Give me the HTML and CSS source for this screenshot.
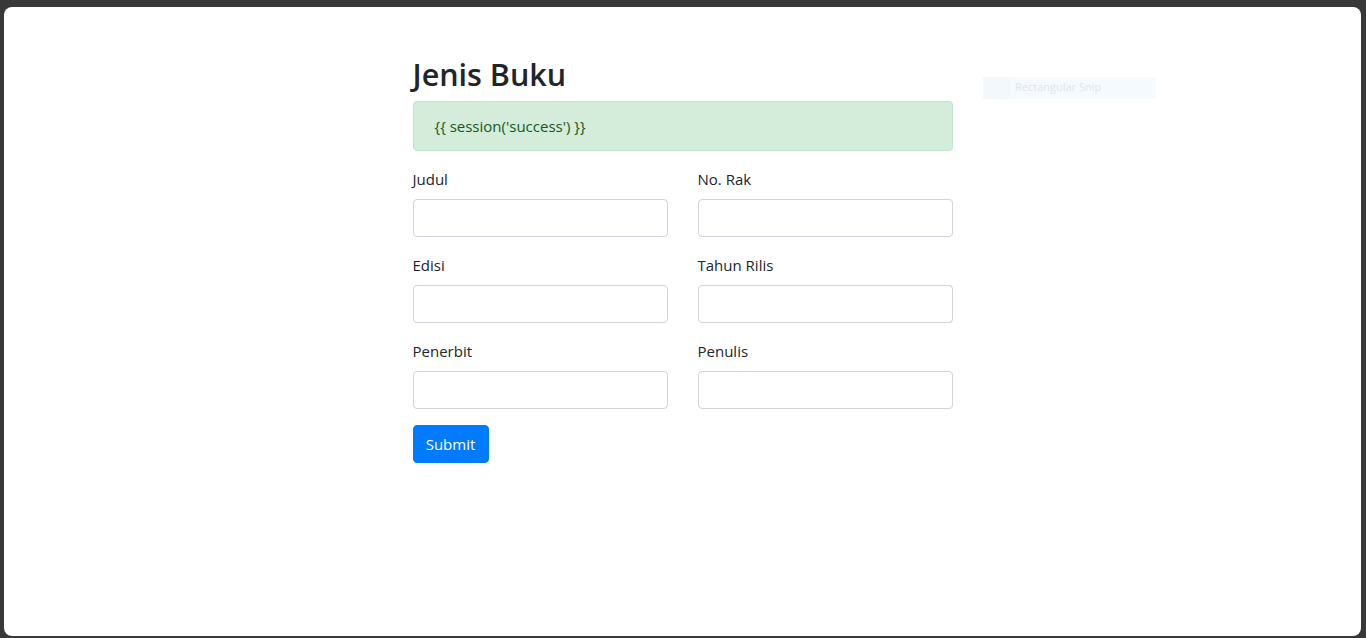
FILE: index.html
```html
<!DOCTYPE html>
<html lang="id">
<head>
<meta charset="utf-8">
<title>Jenis Buku</title>
<link rel="stylesheet" href="styles.css">
</head>
<body>
<div class="window">
  <div class="container">
    <h1 class="title">Jenis Buku</h1>
    <div class="alert">{{ session('success') }}</div>
    <form class="form">
      <div class="grid">
        <div class="group">
          <label class="label">Judul</label>
          <input class="input" type="text">
        </div>
        <div class="group">
          <label class="label">No. Rak</label>
          <input class="input" type="text">
        </div>
        <div class="group">
          <label class="label">Edisi</label>
          <input class="input" type="text">
        </div>
        <div class="group">
          <label class="label">Tahun Rilis</label>
          <input class="input" type="text">
        </div>
        <div class="group">
          <label class="label">Penerbit</label>
          <input class="input" type="text">
        </div>
        <div class="group">
          <label class="label">Penulis</label>
          <input class="input" type="text">
        </div>
      </div>
      <button class="btn" type="button">Submit</button>
    </form>
  </div>
  <div class="snip"><span class="snip-icon"></span><span class="snip-text">Rectangular Snip</span></div>
</div>
</body>
</html>
```
FILE: styles.css
```css
html, body {
  margin: 0;
  padding: 0;
  height: 100%;
}
body {
  background: #383838;
  font-family: "Open Sans", "Noto Sans", sans-serif;
  color: #212529;
  overflow: hidden;
}
.window {
  position: relative;
  box-sizing: border-box;
  margin: 7px 5px 0 4px;
  height: 629px;
  background: #fff;
  border-radius: 8px;
  padding-top: 46px;
}
.container {
  width: 540px;
  margin: 0 auto;
}
.title {
  margin: 0 0 5px;
  font-size: 30.5px;
  line-height: 43px;
  font-weight: 600;
  color: #212529;
}
.alert {
  box-sizing: border-box;
  height: 50px;
  padding: 12px 21px;
  background: #d4edda;
  border: 1px solid #c3e6cb;
  border-radius: 4px;
  color: #155724;
  font-size: 15px;
  line-height: 24px;
  margin-bottom: 16px;
}
.grid {
  display: grid;
  grid-template-columns: 1fr 1fr;
  column-gap: 30px;
}
.group {
  margin-bottom: 16px;
}
.label {
  display: block;
  font-size: 15px;
  line-height: 24px;
  margin-bottom: 8px;
}
.input {
  display: block;
  box-sizing: border-box;
  width: 100%;
  height: 38px;
  border: 1px solid #ced4da;
  border-radius: 4px;
  background: #fff;
  margin: 0;
}
.btn {
  box-sizing: border-box;
  height: 38px;
  width: 76px;
  background: #007bff;
  border: 1px solid #007bff;
  border-radius: 4px;
  color: #fff;
  font-family: inherit;
  font-size: 15px;
  line-height: 24px;
  padding: 6px 0;
}
.snip {
  position: absolute;
  left: 979px;
  top: 70px;
  width: 173px;
  height: 22px;
  display: flex;
  align-items: center;
  background: #f5faff;
}
.snip-icon {
  width: 27px;
  height: 22px;
  background: #f3f8fd;
}
.snip-text {
  padding: 0 0 2px 5px;
  font-size: 11px;
  line-height: 20px;
  color: #e2e4e6;
}
```
